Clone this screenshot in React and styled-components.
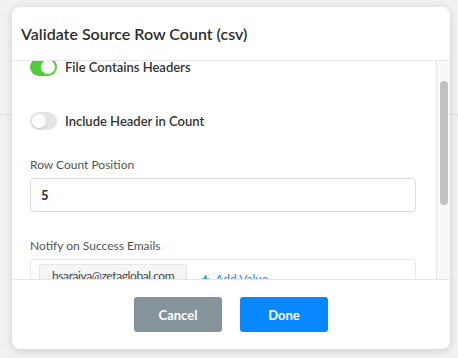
import React, { useLayoutEffect, useRef } from 'react';
import styled, { createGlobalStyle } from 'styled-components';

const GlobalStyle = createGlobalStyle`
  html, body {
    margin: 0;
    padding: 0;
    background: #f1f1f1;
    font-family: Lato, "Open Sans", Arial, sans-serif;
  }
`;

const Page = styled.div`
  position: relative;
  width: 458px;
  height: 358px;
  overflow: hidden;
  background: #f1f1f1;
`;

const Backdrop = styled.div`
  height: 114px;
  border-bottom: 1px solid #e2e2e2;
`;

const Modal = styled.div`
  position: absolute;
  left: 12px;
  top: 7px;
  width: 438px;
  height: 342px;
  background: #fff;
  border-radius: 8px;
  box-shadow: 0 2px 8px rgba(0, 0, 0, 0.14);
  display: flex;
  flex-direction: column;
  overflow: hidden;
`;

const Header = styled.div`
  height: 53px;
  flex: none;
  display: flex;
  align-items: center;
  padding: 0 9px;
  border-bottom: 1px solid #e6e6e6;
`;

const Title = styled.h2`
  margin: 0;
  font-size: 16px;
  font-weight: 600;
  color: #2e2e2e;
`;

const Body = styled.div`
  height: 218px;
  flex: none;
  display: flex;
  border-bottom: 1px solid #e6e6e6;
`;

const Scroller = styled.div`
  flex: 1;
  overflow: hidden;
`;

const ScrollTrack = styled.div`
  width: 14px;
  flex: none;
  background: #f8f8f8;
  border-left: 1px solid #e6e6e6;
  display: flex;
  flex-direction: column;
  align-items: center;
  padding-top: 20px;
  box-sizing: border-box;
`;

const ScrollThumb = styled.div`
  width: 8px;
  height: 124px;
  border-radius: 4px;
  background: #c1c1c1;
`;

const Content = styled.div`
  padding: 34px 20px 34px 18px;
`;

const ToggleRow = styled.div`
  display: flex;
  align-items: center;
  gap: 8px;
  height: 18px;
  margin-bottom: ${(p) => p.$gap || 0}px;
`;

const Switch = styled.span`
  position: relative;
  width: 27px;
  height: 18px;
  border-radius: 9px;
  background: ${(p) => (p.$on ? '#52cc3c' : '#e4e4e4')};
  flex: none;

  &::after {
    content: '';
    position: absolute;
    top: 2px;
    left: ${(p) => (p.$on ? '11px' : '2px')};
    width: 14px;
    height: 14px;
    border-radius: 50%;
    background: #fff;
    box-shadow: ${(p) => (p.$on ? 'none' : '0 1px 2px rgba(0,0,0,0.12)')};
  }
`;

const ToggleLabel = styled.span`
  font-size: 13px;
  font-weight: 600;
  color: #333;
`;

const FieldLabel = styled.div`
  font-size: 12px;
  color: #4f5558;
  margin-bottom: 5px;
  line-height: 16px;
`;

const Input = styled.div`
  height: 32px;
  border: 1px solid #dcdcdc;
  border-radius: 4px;
  display: flex;
  align-items: center;
  padding: 0 10px;
  font-size: 13px;
  font-weight: 700;
  color: #2e2e2e;
  margin-bottom: 26px;
`;

const TagBox = styled.div`
  min-height: 40px;
  border: 1px solid #e8e8e8;
  border-radius: 4px;
  display: flex;
  align-items: flex-start;
  gap: 14px;
  padding: 4px 8px;
  margin-bottom: ${(p) => p.$gap || 0}px;
`;

const Tag = styled.span`
  background: #f5f5f5;
  border: 1px solid #e6e6e6;
  border-radius: 2px;
  padding: 3px 12px 8px;
  font-size: 12px;
  line-height: 16px;
  letter-spacing: -0.4px;
  color: #3f4447;
`;

const AddValue = styled.span`
  display: flex;
  align-items: center;
  gap: 5px;
  margin-top: 8px;
  font-size: 12px;
  line-height: 14px;
  color: #1a8cf0;
`;

const Footer = styled.div`
  flex: 1;
  display: flex;
  align-items: center;
  justify-content: center;
  gap: 18px;
`;

const Button = styled.button`
  width: 88px;
  height: 35px;
  border: none;
  border-radius: 3px;
  background: ${(p) => (p.$primary ? '#0a88ff' : '#85939a')};
  color: #fff;
  font-family: inherit;
  font-size: 13px;
  font-weight: 700;
`;

const Plus = () => (
  <svg width="9" height="9" viewBox="0 0 10 10">
    <path d="M5 0.5v9M0.5 5h9" stroke="#1a8cf0" strokeWidth="2.4" />
  </svg>
);

export default function App() {
  const scrollRef = useRef(null);

  useLayoutEffect(() => {
    if (scrollRef.current) scrollRef.current.scrollTop = 37;
  }, []);

  return (
    <Page>
      <GlobalStyle />
      <Backdrop />
      <Modal>
        <Header>
          <Title>Validate Source Row Count (csv)</Title>
        </Header>
        <Body>
          <Scroller ref={scrollRef}>
            <Content>
              <ToggleRow $gap={36}>
                <Switch $on />
                <ToggleLabel>File Contains Headers</ToggleLabel>
              </ToggleRow>
              <ToggleRow $gap={27}>
                <Switch />
                <ToggleLabel>Include Header in Count</ToggleLabel>
              </ToggleRow>
              <FieldLabel>Row Count Position</FieldLabel>
              <Input>5</Input>
              <FieldLabel>Notify on Success Emails</FieldLabel>
              <TagBox $gap={20}>
                <Tag>hsaraiva@zetaglobal.com</Tag>
                <AddValue>
                  <Plus />
                  Add Value
                </AddValue>
              </TagBox>
              <FieldLabel>Notify on Failure Emails</FieldLabel>
              <TagBox>
                <Tag>hsaraiva@zetaglobal.com</Tag>
                <AddValue>
                  <Plus />
                  Add Value
                </AddValue>
              </TagBox>
            </Content>
          </Scroller>
          <ScrollTrack>
            <ScrollThumb />
          </ScrollTrack>
        </Body>
        <Footer>
          <Button>Cancel</Button>
          <Button $primary>Done</Button>
        </Footer>
      </Modal>
    </Page>
  );
}
